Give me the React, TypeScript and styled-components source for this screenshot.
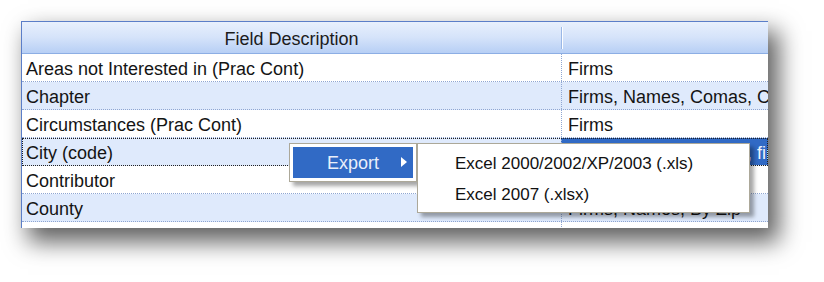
import React from 'react';
import styled, { createGlobalStyle } from 'styled-components';

const GlobalStyle = createGlobalStyle`
    body {
        margin: 0;
        background: #fff;
        font-family: "Liberation Sans", Arial, sans-serif;
        color: #111;
    }
`;

type RowData = { name: string; usage: string };

const rows: RowData[] = [
    { name: 'Areas not Interested in (Prac Cont)', usage: 'Firms' },
    { name: 'Chapter', usage: 'Firms, Names, Comas, Cross Reference' },
    { name: 'Circumstances (Prac Cont)', usage: 'Firms' },
    { name: 'City (code)', usage: 'Firms, Names, Comas, firms' },
    { name: 'Contributor', usage: 'Firms' },
    { name: 'County', usage: 'Firms, Names, By Zip' },
    { name: '', usage: '' },
];

const SELECTED = 3;

export default function App() {
    return (
        <>
            <GlobalStyle />
            <SPage>
                <SGrid>
                    <SHeader>
                        <SHeadCell>Field Description</SHeadCell>
                        <SHeadCell $divider />
                    </SHeader>
                    {rows.map((r, i) => (
                        <SRow key={i} $alt={i % 2 === 1} $focused={i === SELECTED}>
                            <SCell>{r.name}</SCell>
                            <SCell $second $selected={i === SELECTED}>{r.usage}</SCell>
                        </SRow>
                    ))}
                </SGrid>

                <SMenu>
                    <SMenuItem $active>
                        Export
                        <SArrow />
                    </SMenuItem>
                </SMenu>
                <SSubMenu>
                    <SSubItem>Excel 2000/2002/XP/2003 (.xls)</SSubItem>
                    <SSubItem>Excel 2007 (.xlsx)</SSubItem>
                </SSubMenu>
            </SPage>
        </>
    );
}

const SPage = styled.div`
    position: relative;
    width: 824px;
    height: 282px;
    padding: 21px 0 0 21px;
    box-sizing: border-box;
`;

const SGrid = styled.div`
    width: 747px;
    height: 207px;
    box-sizing: border-box;
    overflow: hidden;
    border-top: 1px solid #5b7ec8;
    border-left: 1px solid #5b7ec8;
    background: #fff;
    box-shadow: 9px 12px 22px 2px rgba(0, 0, 0, 0.62);
`;

const SHeader = styled.div`
    display: grid;
    grid-template-columns: 539px 1fr;
    height: 32px;
    box-sizing: border-box;
    background: linear-gradient(#e8f0fd, #d5e3fa 50%, #b7cff5);
    border-bottom: 1px solid #8caee4;
`;

const SHeadCell = styled.div<{ $divider?: boolean }>`
    display: flex;
    align-items: center;
    justify-content: center;
    padding-top: 3px;
    font-size: 18px;
    color: #1c1c1c;
    position: relative;
    ${p => p.$divider && `
        &::before {
            content: '';
            position: absolute;
            left: 0;
            top: 5px;
            bottom: 4px;
            width: 2px;
            background: linear-gradient(90deg, #9ab7e6 50%, #fdfeff 50%);
        }
    `}
`;

const SRow = styled.div<{ $alt: boolean; $focused: boolean }>`
    display: grid;
    grid-template-columns: 539px 1fr;
    height: 28px;
    box-sizing: border-box;
    background: ${p => (p.$alt ? '#dfeafc' : '#fff')};
    border-bottom: 1px dotted #8fa6d2;
    ${p => p.$focused && `
        outline: 1px dotted #222;
        outline-offset: -1px;
        border-bottom-color: #222;
    `}
`;

const SCell = styled.div<{ $second?: boolean; $selected?: boolean }>`
    display: flex;
    align-items: center;
    padding: 3px 0 0 ${p => (p.$second ? '6px' : '4px')};
    font-size: 18px;
    white-space: nowrap;
    overflow: hidden;
    color: ${p => (p.$selected ? '#eef3fc' : '#141414')};
    background: ${p => (p.$selected ? '#316ac5' : 'transparent')};
    border-left: ${p => (p.$second ? '1px dotted #8fa6d2' : 'none')};
`;

const SMenu = styled.div`
    position: absolute;
    left: 289px;
    top: 143px;
    width: 128px;
    box-sizing: border-box;
    padding: 3px;
    background: #fff;
    border: 1px solid #aca899;
    box-shadow: 4px 4px 4px rgba(0, 0, 0, 0.35);
`;

const SMenuItem = styled.div<{ $active?: boolean }>`
    position: relative;
    height: 31px;
    display: flex;
    align-items: center;
    padding: 2px 0 0 34px;
    box-sizing: border-box;
    font-size: 18px;
    color: ${p => (p.$active ? '#e9effa' : '#111')};
    background: ${p => (p.$active ? '#316ac5' : 'transparent')};
`;

const SArrow = styled.span`
    position: absolute;
    right: 6px;
    top: 10px;
    width: 0;
    height: 0;
    border-top: 5px solid transparent;
    border-bottom: 5px solid transparent;
    border-left: 6px solid #fff;
`;

const SSubMenu = styled.div`
    position: absolute;
    left: 417px;
    top: 143px;
    width: 333px;
    box-sizing: border-box;
    padding: 3px;
    background: #fff;
    border: 1px solid #aca899;
    box-shadow: 4px 4px 4px rgba(0, 0, 0, 0.35);
`;

const SSubItem = styled.div`
    height: 31px;
    display: flex;
    align-items: center;
    padding: 2px 0 0 34px;
    box-sizing: border-box;
    font-size: 17px;
    color: #111;
`;
